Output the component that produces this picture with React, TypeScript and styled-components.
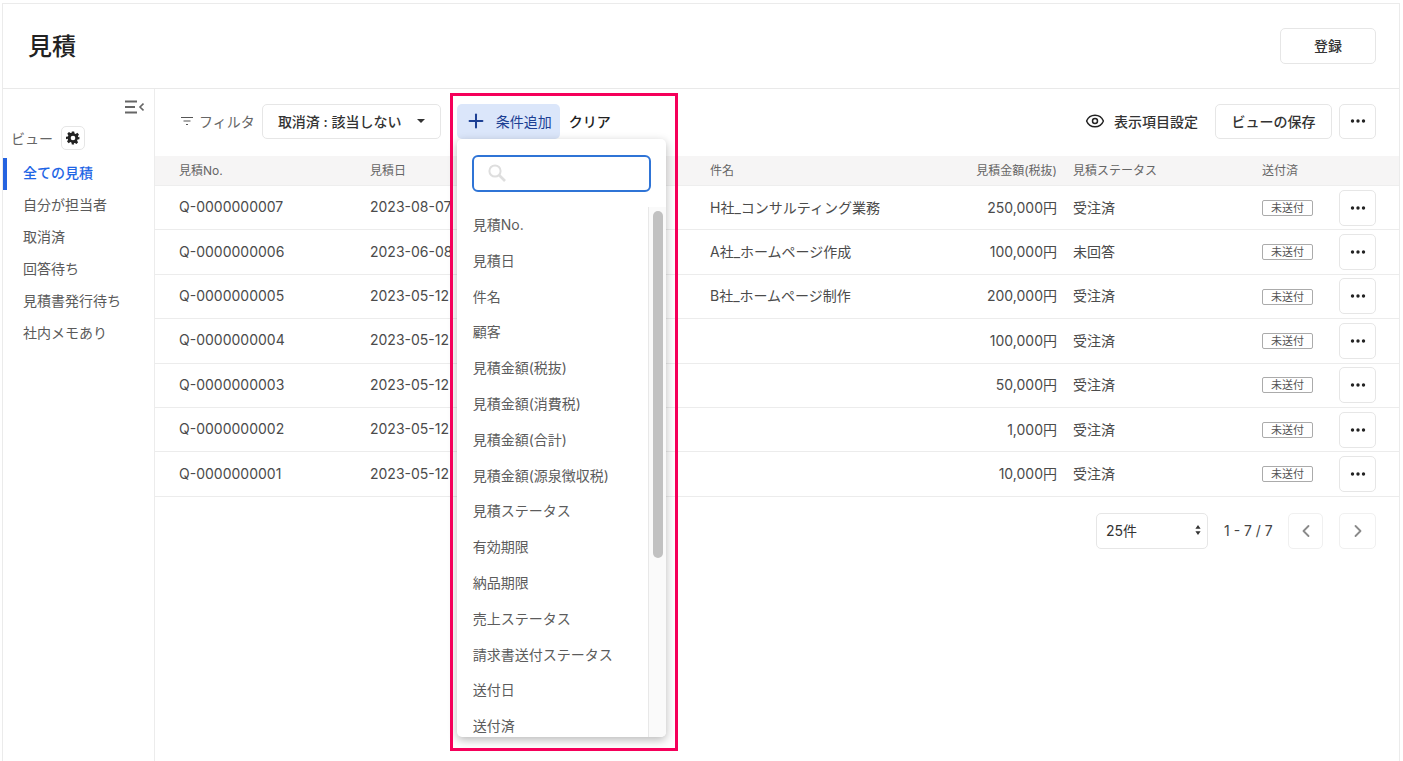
import styled, { createGlobalStyle } from "styled-components";
import { Plus, Eye, ChevronLeft, ChevronRight } from "lucide-react";

const GlobalStyle = createGlobalStyle`
  html, body {
    margin: 0;
    padding: 0;
    height: 100%;
    background: #fff;
    overflow: hidden;
  }
  body {
    font-family: Inter, "Noto Sans CJK JP", sans-serif;
    color: #4b4b4b;
  }
`;

const rows = [
  { no: "Q-0000000007", date: "2023-08-07", name: "H社_コンサルティング業務", amount: "250,000円", status: "受注済" },
  { no: "Q-0000000006", date: "2023-06-08", name: "A社_ホームページ作成", amount: "100,000円", status: "未回答" },
  { no: "Q-0000000005", date: "2023-05-12", name: "B社_ホームページ制作", amount: "200,000円", status: "受注済" },
  { no: "Q-0000000004", date: "2023-05-12", name: "", amount: "100,000円", status: "受注済" },
  { no: "Q-0000000003", date: "2023-05-12", name: "", amount: "50,000円", status: "受注済" },
  { no: "Q-0000000002", date: "2023-05-12", name: "", amount: "1,000円", status: "受注済" },
  { no: "Q-0000000001", date: "2023-05-12", name: "", amount: "10,000円", status: "受注済" },
];

const views = ["全ての見積", "自分が担当者", "取消済", "回答待ち", "見積書発行待ち", "社内メモあり"];

const fields = [
  "見積No.",
  "見積日",
  "件名",
  "顧客",
  "見積金額(税抜)",
  "見積金額(消費税)",
  "見積金額(合計)",
  "見積金額(源泉徴収税)",
  "見積ステータス",
  "有効期限",
  "納品期限",
  "売上ステータス",
  "請求書送付ステータス",
  "送付日",
  "送付済",
];

const Dots = () => (
  <svg width="16" height="4" viewBox="0 0 16 4" fill="#222">
    <circle cx="2.5" cy="2" r="1.7" />
    <circle cx="8" cy="2" r="1.7" />
    <circle cx="13.5" cy="2" r="1.7" />
  </svg>
);

export default function App() {
  return (
    <>
      <GlobalStyle />
      <Frame>
        <Header>
          <Title>見積</Title>
          <HeaderButton>登録</HeaderButton>
        </Header>
        <Body>
          <Sidebar>
            <CollapseRow>
              <svg width="19" height="14" viewBox="0 0 19 14" fill="none" stroke="#666" strokeWidth="2">
                <path d="M0 1.5h12M0 7h10M0 12.5h12" />
                <path d="M18.5 3.5 15 7l3.5 3.5" strokeWidth="1.6" />
              </svg>
            </CollapseRow>
            <ViewHead>
              <ViewLabel>ビュー</ViewLabel>
              <GearButton>
                <svg width="14" height="14" viewBox="0 0 24 24" fill="#222">
                  <path
                    fillRule="evenodd"
                    d="M10 1h4l.7 3.2 1.9.8 2.8-1.8 2.8 2.8-1.8 2.8.8 1.9L23 10v4l-3.2.7-.8 1.9 1.8 2.8-2.8 2.8-2.8-1.8-1.9.8L14 23h-4l-.7-3.2-1.9-.8-2.8 1.8-2.8-2.8 1.8-2.8-.8-1.9L0 14v-4l3.2-.7.8-1.9L2.2 4.6 5 1.8l2.8 1.8 1.9-.8zM12 8a4 4 0 1 0 0 8 4 4 0 0 0 0-8z"
                  />
                </svg>
              </GearButton>
            </ViewHead>
            <NavList>
              {views.map((view, index) => (
                <NavItem key={view} $active={index === 0}>
                  {view}
                </NavItem>
              ))}
            </NavList>
          </Sidebar>
          <Main>
            <Toolbar>
              <FilterLabel>
                <svg width="14" height="10" viewBox="0 0 14 10" fill="none" stroke="#555" strokeWidth="1.2">
                  <path d="M1 1.5h12M3.5 5h7M6 8.5h2" />
                </svg>
                フィルタ
              </FilterLabel>
              <FilterChip>
                取消済 : 該当しない
                <Caret />
              </FilterChip>
              <AddWrap>
                <AddButton>
                  <Plus size={22} strokeWidth={2.2} />
                  条件追加
                </AddButton>
                <Popup>
                  <SearchBox>
                    <svg width="18" height="18" viewBox="0 0 18 18" fill="none" stroke="#dedede" strokeWidth="2">
                      <circle cx="7" cy="7" r="5.6" />
                      <path d="M11 11l6 6" strokeWidth="2.6" />
                    </svg>
                  </SearchBox>
                  <ListArea>
                    <FieldList>
                      {fields.map((field) => (
                        <FieldItem key={field}>{field}</FieldItem>
                      ))}
                    </FieldList>
                    <ScrollTrack>
                      <ScrollThumb />
                    </ScrollTrack>
                  </ListArea>
                </Popup>
              </AddWrap>
              <ClearButton>クリア</ClearButton>
              <ToolbarRight>
                <ColumnSetting>
                  <Eye size={20} strokeWidth={1.8} color="#222" />
                  表示項目設定
                </ColumnSetting>
                <SaveButton>ビューの保存</SaveButton>
                <ToolbarMore>
                  <Dots />
                </ToolbarMore>
              </ToolbarRight>
            </Toolbar>
            <TableHead>
              <span>見積No.</span>
              <span>見積日</span>
              <span />
              <span>件名</span>
              <AmountHead>見積金額(税抜)</AmountHead>
              <span>見積ステータス</span>
              <span>送付済</span>
              <span />
            </TableHead>
            {rows.map((row) => (
              <TableRow key={row.no}>
                <span>{row.no}</span>
                <span>{row.date}</span>
                <span />
                <span>{row.name}</span>
                <Amount>{row.amount}</Amount>
                <span>{row.status}</span>
                <span>
                  <Badge>未送付</Badge>
                </span>
                <SquareButton>
                  <Dots />
                </SquareButton>
              </TableRow>
            ))}
            <Pagination>
              <PageSize>
                25件
                <svg width="6" height="10" viewBox="0 0 6 10" fill="#333">
                  <path d="M3 0l2.6 3.8H.4zM3 10L.4 6.2h5.2z" />
                </svg>
              </PageSize>
              <PageInfo>1 - 7 / 7</PageInfo>
              <PrevButton>
                <ChevronLeft size={20} strokeWidth={2.2} color="#8a8a8a" />
              </PrevButton>
              <NextButton>
                <ChevronRight size={20} strokeWidth={2.2} color="#8a8a8a" />
              </NextButton>
            </Pagination>
          </Main>
        </Body>
        <Highlight />
      </Frame>
    </>
  );
}

const Frame = styled.div`
  position: relative;
  box-sizing: border-box;
  width: 1398px;
  height: 758px;
  margin: 3px 0 0 2px;
  border: 1px solid #ebebeb;
  border-bottom: none;
  overflow: hidden;
`;

const Header = styled.header`
  box-sizing: border-box;
  height: 85px;
  display: flex;
  align-items: center;
  justify-content: space-between;
  padding: 0 23px 0 25px;
  border-bottom: 1px solid #e9e9e9;
`;

const Title = styled.h1`
  margin: 0;
  padding-bottom: 4px;
  font-size: 24px;
  font-weight: 500;
  color: #222;
`;

const OutlineButton = styled.button`
  box-sizing: border-box;
  display: flex;
  align-items: center;
  justify-content: center;
  padding: 0;
  background: #fff;
  border: 1px solid #e6e6e6;
  border-radius: 5px;
  font-family: inherit;
  font-size: 14px;
  font-weight: 500;
  color: #333;
`;

const HeaderButton = styled(OutlineButton)`
  width: 96px;
  height: 36px;
  padding-bottom: 3px;
`;

const Body = styled.div`
  display: flex;
  height: 672px;
`;

const Sidebar = styled.aside`
  box-sizing: border-box;
  width: 152px;
  flex-shrink: 0;
  border-right: 1px solid #ececec;
`;

const CollapseRow = styled.div`
  display: flex;
  justify-content: flex-end;
  padding: 11px 10px 0 0;
  height: 26px;
`;

const ViewHead = styled.div`
  display: flex;
  align-items: center;
  gap: 8px;
  height: 24px;
  padding-left: 8px;
`;

const ViewLabel = styled.span`
  font-size: 14px;
  color: #666;
`;

const GearButton = styled(OutlineButton)`
  width: 24px;
  height: 24px;
`;

const NavList = styled.ul`
  list-style: none;
  margin: 8px 0 0;
  padding: 0;
`;

const NavItem = styled.li<{ $active?: boolean }>`
  box-sizing: border-box;
  height: 32px;
  line-height: 30px;
  padding-left: ${(p) => (p.$active ? "16px" : "20px")};
  font-size: 14px;
  font-weight: ${(p) => (p.$active ? 500 : 400)};
  color: ${(p) => (p.$active ? "#1f66e5" : "#5a5a5a")};
  border-left: ${(p) => (p.$active ? "4px solid #2563e0" : "none")};
`;

const Main = styled.main`
  flex: 1;
  min-width: 0;
`;

const Toolbar = styled.div`
  box-sizing: border-box;
  display: flex;
  align-items: center;
  height: 67px;
  padding: 0 23px 3px 25px;
`;

const FilterLabel = styled.div`
  display: flex;
  align-items: center;
  gap: 5px;
  font-size: 14px;
  color: #666;
`;

const FilterChip = styled(OutlineButton)`
  width: 179px;
  height: 35px;
  margin-left: 7px;
  gap: 15px;
`;

const Caret = styled.span`
  width: 0;
  height: 0;
  border-left: 4px solid transparent;
  border-right: 4px solid transparent;
  border-top: 4px solid #333;
`;

const AddWrap = styled.div`
  position: relative;
  margin-left: 16px;
`;

const AddButton = styled.button`
  box-sizing: border-box;
  display: flex;
  align-items: center;
  gap: 9px;
  width: 103px;
  height: 35px;
  padding: 0 0 0 8px;
  border: none;
  border-radius: 5px;
  background: #dbe6fa;
  font-family: inherit;
  font-size: 14px;
  font-weight: 400;
  white-space: nowrap;
  color: #1c3f94;
`;

const ClearButton = styled.button`
  margin-left: 9px;
  padding: 0;
  border: none;
  background: none;
  font-family: inherit;
  font-size: 14px;
  font-weight: 500;
  color: #222;
`;

const Popup = styled.div`
  position: absolute;
  top: 35px;
  left: 0;
  z-index: 5;
  width: 209px;
  height: 598px;
  background: #fff;
  border-radius: 5px;
  box-shadow: 0 3px 10px rgba(0, 0, 0, 0.28);
  overflow: hidden;
`;

const SearchBox = styled.div`
  box-sizing: border-box;
  display: flex;
  align-items: center;
  width: 179px;
  height: 37px;
  margin: 16px 0 0 15px;
  padding-left: 14px;
  border: 2px solid #2f74d6;
  border-radius: 6px;
`;

const ListArea = styled.div`
  display: flex;
  height: 531px;
  margin-top: 15.5px;
`;

const FieldList = styled.ul`
  flex: 1;
  list-style: none;
  margin: 0;
  padding: 0;
  overflow: hidden;
`;

const FieldItem = styled.li`
  height: 35.8px;
  line-height: 35.8px;
  padding-left: 16px;
  font-size: 14px;
  color: #5c5c5c;
  white-space: nowrap;
`;

const ScrollTrack = styled.div`
  box-sizing: border-box;
  width: 18px;
  padding: 3.5px 3px 0 4px;
  background: #fafafa;
  border-left: 1px solid #e8e8e8;
`;

const ScrollThumb = styled.div`
  width: 10px;
  height: 347px;
  border-radius: 5px;
  background: #c1c1c1;
`;

const ToolbarRight = styled.div`
  display: flex;
  align-items: center;
  margin-left: auto;
`;

const ColumnSetting = styled.div`
  display: flex;
  align-items: center;
  gap: 9px;
  font-size: 14px;
  font-weight: 500;
  color: #333;
`;

const SaveButton = styled(OutlineButton)`
  width: 117px;
  height: 35px;
  margin: 0 7px 0 17px;
`;

const SquareButton = styled(OutlineButton)`
  width: 37px;
  height: 36px;
`;

const ToolbarMore = styled(SquareButton)`
  height: 35px;
`;

const columns = "191px 170px 170px 1fr 115px 189px 77px 37px";

const TableHead = styled.div`
  box-sizing: border-box;
  display: grid;
  grid-template-columns: ${columns};
  align-items: center;
  height: 30px;
  padding: 0 23px 2px 24px;
  background: #f6f5f5;
  border-bottom: 1px solid #eee;
  font-size: 12px;
  color: #666;
`;

const TableRow = styled.div`
  box-sizing: border-box;
  display: grid;
  grid-template-columns: ${columns};
  align-items: center;
  height: 44.4px;
  padding: 0 23px 0 24px;
  border-bottom: 1px solid #ececec;
  font-size: 14px;
  color: #4b4b4b;

  & > span {
    padding-bottom: 2px;
  }
`;

const AmountHead = styled.span`
  text-align: right;
  padding-right: 16px;
  white-space: nowrap;
`;

const Amount = styled.span`
  text-align: right;
  padding-right: 16px;
`;

const Badge = styled.span`
  display: inline-block;
  box-sizing: border-box;
  width: 51px;
  height: 16px;
  line-height: 14px;
  text-align: center;
  border: 1px solid #ababab;
  border-radius: 2px;
  font-size: 11px;
  color: #555;
  vertical-align: middle;
`;

const Pagination = styled.div`
  display: flex;
  align-items: center;
  justify-content: flex-end;
  padding: 16px 23px 0 0;
`;

const PageSize = styled.div`
  box-sizing: border-box;
  display: flex;
  align-items: center;
  justify-content: space-between;
  width: 112px;
  height: 36px;
  padding: 0 6px 2px 9px;
  border: 1px solid #e6e6e6;
  border-radius: 5px;
  font-size: 14px;
  color: #333;
`;

const PageInfo = styled.span`
  width: 48px;
  margin: 0 16px;
  font-size: 14px;
  white-space: nowrap;
  color: #444;
`;

const PrevButton = styled(SquareButton)`
  width: 35px;
  margin-right: 16px;
  border-color: #f0f0f0;
`;

const NextButton = styled(SquareButton)`
  border-color: #f0f0f0;
`;

const Highlight = styled.div`
  position: absolute;
  top: 89px;
  left: 447px;
  box-sizing: border-box;
  width: 228px;
  height: 658px;
  border: 3px solid #f5005a;
  z-index: 10;
  pointer-events: none;
`;
